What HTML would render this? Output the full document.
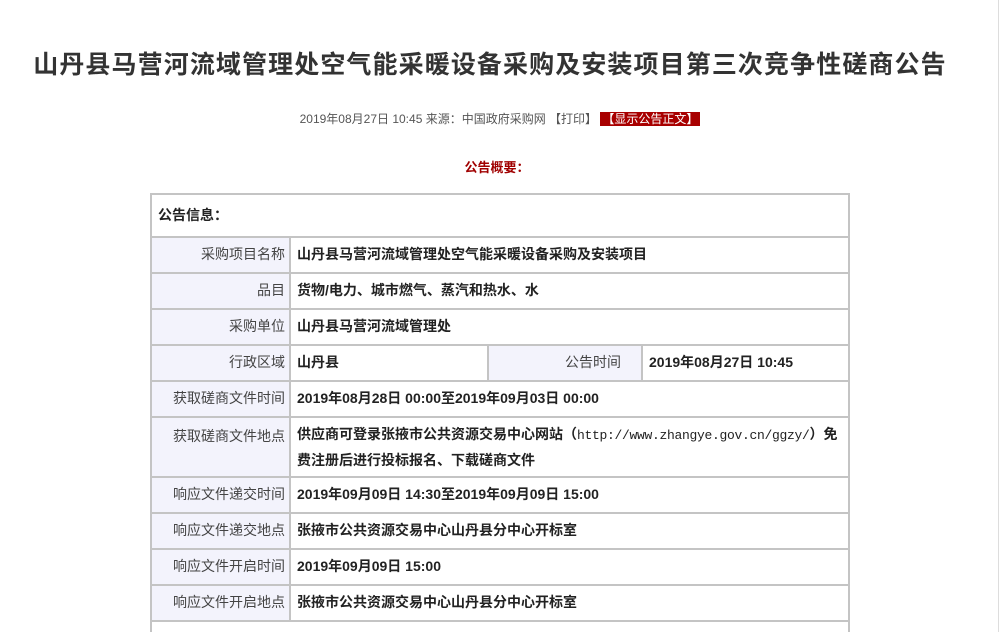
<!DOCTYPE html>
<html><head><meta charset="utf-8"><style>
html,body{margin:0;width:1005px;height:632px;overflow:hidden}
body{background:#fff;font-family:"Liberation Sans","Noto Sans CJK SC",sans-serif;position:relative}
.a{position:absolute}
h1{position:absolute;left:0;width:980px;top:47px;margin:0;text-align:center;font-size:25px;letter-spacing:1.1px;font-weight:bold;color:#333;line-height:36px;white-space:nowrap}
.meta{left:0;width:1000px;top:110px;text-align:center;font-size:12px;color:#555}
.meta span{background:#a80000;color:#fff;padding:0 2px}
.sum{left:0;width:994px;top:157px;text-align:center;font-size:13px;font-weight:bold;color:#a00000}
.c{position:absolute;box-sizing:border-box;border:2px solid #c4c4c4;font-size:14px;color:#333;display:flex;align-items:center;white-space:nowrap;padding-bottom:2px}
.l{background:#f3f3fc;justify-content:flex-end;padding-right:4px;color:#444}
.v{background:#fff;font-weight:bold;padding-left:6px;color:#222}
.m{font-family:"Liberation Mono",monospace;font-weight:normal;font-size:13px;letter-spacing:-0.3px}
</style></head><body>
<h1>山丹县马营河流域管理处空气能采暖设备采购及安装项目第三次竞争性磋商公告</h1>
<div class="a meta">2019年08月27日 10:45 来源：中国政府采购网 【打印】 <span>【显示公告正文】</span></div>
<div class="a sum">公告概要：</div>

<div class="c v" style="left:150px;top:193px;width:700px;height:45px;padding-left:6px">公告信息：</div>

<div class="c l" style="left:150px;top:236px;width:141px;height:38px">采购项目名称</div>
<div class="c v" style="left:289px;top:236px;width:561px;height:38px">山丹县马营河流域管理处空气能采暖设备采购及安装项目</div>

<div class="c l" style="left:150px;top:272px;width:141px;height:38px">品目</div>
<div class="c v" style="left:289px;top:272px;width:561px;height:38px">货物/电力、城市燃气、蒸汽和热水、水</div>

<div class="c l" style="left:150px;top:308px;width:141px;height:38px">采购单位</div>
<div class="c v" style="left:289px;top:308px;width:561px;height:38px">山丹县马营河流域管理处</div>

<div class="c l" style="left:150px;top:344px;width:141px;height:38px">行政区域</div>
<div class="c v" style="left:289px;top:344px;width:200px;height:38px">山丹县</div>
<div class="c l" style="left:487px;top:344px;width:156px;height:38px;padding-right:20px">公告时间</div>
<div class="c v" style="left:641px;top:344px;width:209px;height:38px">2019年08月27日 10:45</div>

<div class="c l" style="left:150px;top:380px;width:141px;height:38px">获取磋商文件时间</div>
<div class="c v" style="left:289px;top:380px;width:561px;height:38px">2019年08月28日 00:00至2019年09月03日 00:00</div>

<div class="c l" style="left:150px;top:416px;width:141px;height:62px;align-items:flex-start;padding-top:8px">获取磋商文件地点</div>
<div class="c v" style="left:289px;top:416px;width:561px;height:62px;line-height:24px;padding-right:6px;white-space:normal;display:block;padding-top:4px">供应商可登录张掖市公共资源交易中心网站（<span class="m">http://www.zhangye.gov.cn/ggzy/</span>）免<br>费注册后进行投标报名、下载磋商文件</div>

<div class="c l" style="left:150px;top:476px;width:141px;height:38px">响应文件递交时间</div>
<div class="c v" style="left:289px;top:476px;width:561px;height:38px">2019年09月09日 14:30至2019年09月09日 15:00</div>

<div class="c l" style="left:150px;top:512px;width:141px;height:38px">响应文件递交地点</div>
<div class="c v" style="left:289px;top:512px;width:561px;height:38px">张掖市公共资源交易中心山丹县分中心开标室</div>

<div class="c l" style="left:150px;top:548px;width:141px;height:38px">响应文件开启时间</div>
<div class="c v" style="left:289px;top:548px;width:561px;height:38px">2019年09月09日 15:00</div>

<div class="c l" style="left:150px;top:584px;width:141px;height:38px">响应文件开启地点</div>
<div class="c v" style="left:289px;top:584px;width:561px;height:38px">张掖市公共资源交易中心山丹县分中心开标室</div>

<div class="c v" style="left:150px;top:620px;width:700px;height:40px"></div>
<div class="a" style="left:998px;top:0;width:1px;height:632px;background:#ddd"></div>
</body></html>
